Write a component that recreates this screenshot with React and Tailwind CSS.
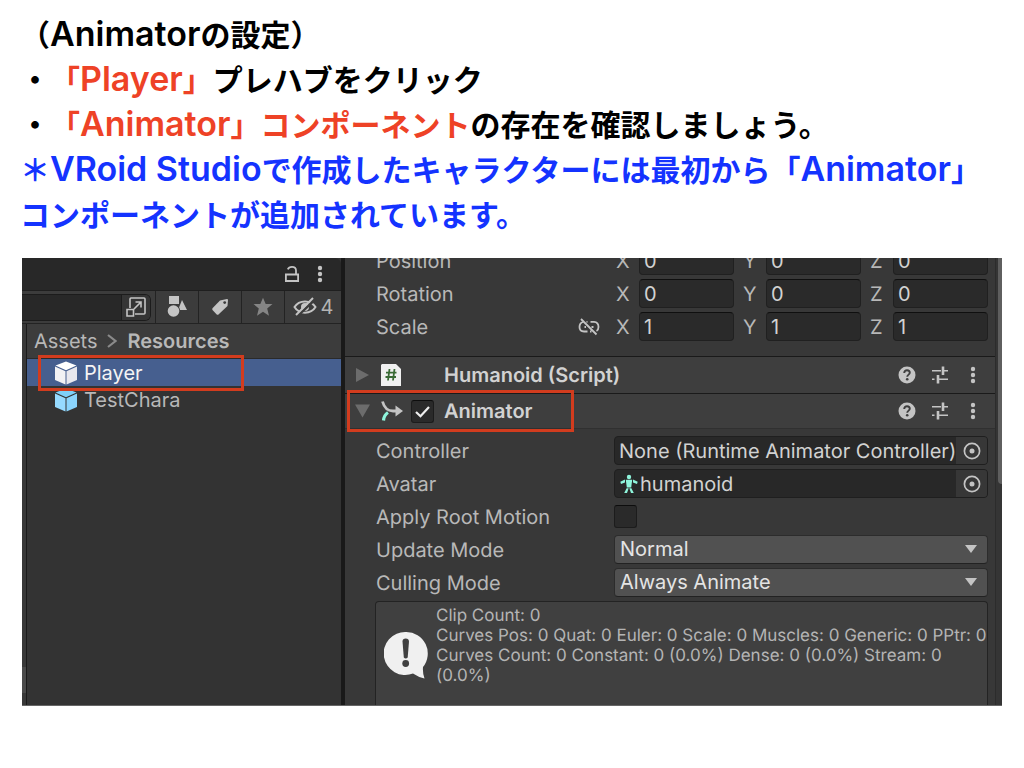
import { useState } from "react"

const transform = [
    { name: "Position", values: ["0", "0", "0"] },
    { name: "Rotation", values: ["0", "0", "0"] },
    { name: "Scale", values: ["1", "1", "1"], unlinked: true },
]

const axes = ["X", "Y", "Z"]

function Latin({ children }) {
    return <span className="font-[Inter,sans-serif] font-semibold text-[34px]/[30px]">{children}</span>
}

function Dots() {
    return (
        <svg viewBox="0 0 6 20" className="w-[6px] h-5" fill="#c4c4c4">
            <circle cx="3" cy="4" r="2.2" />
            <circle cx="3" cy="10" r="2.2" />
            <circle cx="3" cy="16" r="2.2" />
        </svg>
    )
}

function Cube({ top, left, right }) {
    return (
        <svg viewBox="0 0 24 24" className="w-6 h-6 shrink-0">
            <path d="M12 .5 22.500 4.600 12 9.200 1.500 4.600Z" fill={top} />
            <path d="M1 5.600 11.500 10.200V23.500L1 19Z" fill={left} />
            <path d="M23 5.600 12.500 10.200V23.500L23 19Z" fill={right} />
        </svg>
    )
}

function HeaderButtons() {
    return (
        <div className="ml-auto flex items-center gap-[15px] pr-[13px]">
            <button type="button" aria-label="Help">
                <svg viewBox="0 0 18 18" className="w-[18px] h-[18px]">
                    <circle cx="9" cy="9" r="8.500" fill="#c4c4c4" />
                    <path d="M6.200 7C6.200 5.200 7.400 4.200 9 4.200S11.800 5.200 11.800 6.800C11.800 8.500 9.200 8.800 9.200 10.800" fill="none" stroke="#3e3e3e" strokeWidth="1.900" />
                    <circle cx="9.200" cy="13.300" r="1.300" fill="#3e3e3e" />
                </svg>
            </button>
            <button type="button" aria-label="Presets">
                <svg viewBox="0 0 18 18" className="w-[18px] h-[18px]" fill="none" stroke="#c4c4c4">
                    <path d="M1 4.700H10M13 4.700H17M1 13.300H3.500M8 13.300H17" strokeWidth="1.600" />
                    <path d="M12 0.500V9M7 9V17.500" strokeWidth="2.600" />
                </svg>
            </button>
            <button type="button" aria-label="More" className="w-[18px] flex justify-center">
                <Dots />
            </button>
        </div>
    )
}

function Check({ id, label, checked, onChange }) {
    return (
        <span className="relative w-[23px] h-[23px] shrink-0">
            <input id={id} aria-label={label} type="checkbox" checked={checked} onChange={onChange} className="block appearance-none w-[23px] h-[23px] rounded-[3px] border border-[#1c1c1c] border-t-[#0d0d0d] bg-[#2a2a2a]" />
            {checked && (
                <svg viewBox="0 0 23 23" className="absolute inset-0 pointer-events-none" fill="none" stroke="#eeeeee" strokeWidth="2.200">
                    <path d="M5 12 9.500 16.300 18 7" />
                </svg>
            )}
        </span>
    )
}

function Row({ name, htmlFor, icon, children }) {
    return (
        <div className="flex items-center h-[33px] pl-[31px] pr-[7px]">
            <div className="w-[238px] shrink-0 flex items-center justify-between pr-[14px]">
                {htmlFor ? <label htmlFor={htmlFor}>{name}</label> : <span>{name}</span>}
                {icon}
            </div>
            {children}
        </div>
    )
}

function ObjectField({ name, icon, children }) {
    return (
        <div className="flex-1 min-w-0 h-[29px] flex items-center rounded-[4px] border border-[#1f1f1f] bg-[#282828] text-[#d2d2d2] overflow-hidden">
            <div className="flex-1 flex items-center pl-1 whitespace-nowrap">
                {icon}
                <span>{children}</span>
            </div>
            <button type="button" aria-label={`Select ${name}`} className="w-[31px] h-full bg-[#373737] flex items-center justify-center">
                <svg viewBox="0 0 18 18" className="w-[18px] h-[18px]">
                    <circle cx="9" cy="9" r="7.600" fill="none" stroke="#c4c4c4" strokeWidth="1.700" />
                    <circle cx="9" cy="9" r="2.500" fill="#c4c4c4" />
                </svg>
            </button>
        </div>
    )
}

function Dropdown({ id, value }) {
    return (
        <div className="relative flex-1 h-[29px]">
            <select id={id} defaultValue={value} className="appearance-none block w-full h-full rounded-[4px] border border-[#2c2c2c] border-b-[#222222] bg-[#515151] text-[#e4e4e4] pl-[5px] pb-[2px]">
                <option>{value}</option>
            </select>
            <svg viewBox="0 0 12 8" className="absolute right-[11px] top-[10px] w-3 h-2 pointer-events-none" fill="#c4c4c4">
                <path d="M0 0H12L6 8Z" />
            </svg>
        </div>
    )
}

function Instructions() {
    return (
        <div className="px-5 pt-[11px] font-['Noto_Sans_CJK_JP',sans-serif] font-bold text-[30px]/[45px] text-black whitespace-nowrap [text-spacing-trim:space-all]">
            <p>（<Latin>Animator</Latin>の設定）</p>
            <p>・<span className="text-[#ee4226]">「<Latin>Player</Latin>」</span>プレハブをクリック</p>
            <p>・<span className="text-[#ee4226]">「<Latin>Animator</Latin>」コンポーネント</span>の存在を確認しましょう。</p>
            <div className="text-[#1433ff]">
                <p>＊<Latin>VRoid Studio</Latin>で作成したキャラクターには最初から「<Latin>Animator</Latin>」</p>
                <p>コンポーネントが追加されています。</p>
            </div>
        </div>
    )
}

function Project() {
    return (
        <div className="w-[323px] shrink-0 border-r-[4px] border-[#191919] bg-[#333333] flex flex-col">
            <div className="h-[33px] bg-[#282828] border-b border-[#1f1f1f] flex items-center justify-end gap-[17px] pr-[18px] rounded-tr-[6px]">
                <button type="button" aria-label="Lock">
                    <svg viewBox="0 0 16 18" className="w-4 h-[18px]" fill="none" stroke="#c4c4c4" strokeWidth="1.800">
                        <path d="M1.900 9.500H14.100V16H1.900ZM12 9.500V5.500C12 3 10.500 1.800 8 1.800C6 1.800 4.500 2.600 3.800 4.300" />
                    </svg>
                </button>
                <button type="button" aria-label="Panel menu"><Dots /></button>
            </div>
            <div className="h-[33px] bg-[#3c3c3c] border-b border-[#232323] flex items-stretch">
                <div className="flex-1 min-w-0 flex items-center pr-[4px]">
                    <div className="flex-1 min-w-0 flex h-[27px] rounded-r-[6px] border border-l-0 border-[#1c1c1c] overflow-hidden">
                        <input type="text" aria-label="Search" className="flex-1 min-w-0 bg-[#282828] border-r border-[#1c1c1c]" />
                        <button type="button" aria-label="Open search" className="w-[28px] shrink-0 bg-[#353535] flex items-center justify-center">
                            <svg viewBox="0 0 20 20" className="w-5 h-5" fill="none" stroke="#c4c4c4" strokeWidth="1.600">
                                <path d="M4 11V2Q4 1 5 1H18Q19 1 19 2V16Q19 17 18 17H9M1 12.500H7.500V19H1ZM8 12 14.500 5.500M9.500 5H15V10.500" />
                            </svg>
                        </button>
                    </div>
                </div>
                <button type="button" aria-label="Filter by type" className="w-[43px] shrink-0 border-l border-[#232323] flex items-center justify-center">
                    <svg viewBox="0 0 22 24" className="w-[22px] h-6" fill="#c4c4c4">
                        <path d="M3 1H13V9H3ZM16 5 21 15H12Z" />
                        <circle cx="7.500" cy="16" r="6.800" fill="#3c3c3c" />
                        <circle cx="7.500" cy="16" r="5.800" />
                    </svg>
                </button>
                <button type="button" aria-label="Filter by label" className="w-[43px] shrink-0 border-l border-[#232323] flex items-center justify-center">
                    <svg viewBox="0 0 18 18" className="w-[18px] h-[18px]">
                        <path d="M9 2.500 16 1Q17 1 17 2L16.500 8 7.500 16.500Q6.500 17.300 5.500 16.300L1.500 12Q.8 11 1.700 10Z" fill="#c4c4c4" />
                        <circle cx="13.700" cy="4.600" r="1.400" fill="#3c3c3c" />
                    </svg>
                </button>
                <button type="button" aria-label="Favorites" className="w-[43px] shrink-0 border-l border-[#232323] flex items-center justify-center">
                    <svg viewBox="0 0 20 20" className="w-5 h-5" fill="#858585">
                        <path d="M10 .7 12.700 7H19.500L14.200 11.500 16 18.700 10 14.800 4 18.700 5.800 11.500.5 7H7.300Z" />
                    </svg>
                </button>
                <button type="button" aria-label="Hidden packages" className="w-[57px] shrink-0 border-l border-[#232323] flex items-center justify-center gap-1 text-xl text-[#b4b4b4]">
                    <svg viewBox="0 0 24 20" className="w-6 h-5" fill="none" stroke="#c4c4c4" strokeWidth="2">
                        <path d="M1.500 10C6 2.500 18 2.500 22.500 10C18 17.500 6 17.500 1.500 10Z" />
                        <circle cx="12" cy="10" r="4" fill="#c4c4c4" stroke="none" />
                        <path d="M4 19.500 22.500 2" stroke="#3c3c3c" strokeWidth="2.500" />
                        <path d="M3 18 20 1" />
                    </svg>
                    4
                </button>
            </div>
            <div className="flex-1 flex">
                <div className="w-[5px] bg-[#383838] border-r border-[#1a1a1a] flex flex-col justify-end pb-3">
                    <div className="h-[26px] bg-[#4a4a4a]" />
                </div>
                <div className="flex-1">
                    <nav className="h-[35px] bg-[#3c3c3c] border-b border-[#2a2a2a] flex items-center gap-[10px] pl-[7px]">
                        <a href="#assets">Assets</a>
                        <svg viewBox="0 0 10 14" className="w-[10px] h-[14px]" fill="none" stroke="#8a8a8a" strokeWidth="2.200">
                            <path d="M1 1 8.500 7 1 13" />
                        </svg>
                        <a href="#resources" className="font-semibold">Resources</a>
                    </nav>
                    <div className="relative">
                        <button type="button" className="w-full h-[27px] bg-[#465f8f] text-[#f4f4f4] flex items-center gap-[6px] pl-[27px]">
                            <Cube top="#ffffff" left="#f2f2f4" right="#e8e8ee" />
                            Player
                        </button>
                        <div className="absolute z-10 left-[11px] -top-[4px] w-[206px] h-[36px] border-[3px] border-[#d23c1e] pointer-events-none" />
                    </div>
                    <button type="button" className="w-full h-[27px] flex items-center gap-[6px] pl-[27px]">
                        <Cube top="#7fd0f8" left="#96daff" right="#8ad4fc" />
                        TestChara
                    </button>
                </div>
            </div>
        </div>
    )
}

function Inspector() {
    const [enabled, setEnabled] = useState(true)
    const [rootMotion, setRootMotion] = useState(false)

    return (
        <div className="flex-1 min-w-0 flex bg-[#383838]">
            <div className="flex-1 min-w-0">
                {/* scrolled a little, so the first row is cut by the panel's top */}
                <div className="-mt-[14px] pb-[13px]">
                    {transform.map((item) => (
                        <Row
                            key={item.name}
                            name={item.name}
                            icon={item.unlinked && (
                                <svg viewBox="0 0 22 18" className="w-[22px] h-[18px]" fill="none" stroke="#c4c4c4" strokeWidth="1.800">
                                    <path d="M5 4Q1.500 5 1.500 9Q1.500 13.500 6 13.500H9.500M8.500 3.800H9.500M12.500 3.800H16Q20.500 4 20.500 9Q20.500 12 18.500 13M6.500 9H8M13.500 9H15.500M12 13.500H13.500M3 1 18.500 16.500" />
                                </svg>
                            )}
                        >
                            <div className="flex-1 grid grid-cols-3 gap-[7px]">
                                {axes.map((axis, i) => (
                                    <div key={axis} className="flex items-center">
                                        <label htmlFor={item.name + axis} className="w-[25px] pl-[2px] shrink-0">{axis}</label>
                                        <input id={item.name + axis} type="text" defaultValue={item.values[i]} className="flex-1 min-w-0 h-[29px] rounded-[4px] border border-[#202020] border-t-[#0f0f0f] bg-[#2a2a2a] text-[#d2d2d2] pl-1" />
                                    </div>
                                ))}
                            </div>
                        </Row>
                    ))}
                </div>

                <div className="h-[37px] border-t border-[#1a1a1a] bg-[#3e3e3e] flex items-center pl-[11px]">
                    <svg viewBox="0 0 14 16" className="w-[14px] h-4" fill="#6c6c6c"><path d="M0 1 13 8 0 15Z" /></svg>
                    <svg viewBox="0 0 20 24" className="w-5 h-6 ml-[11px]">
                        <path d="M1 1H15L20 6V23H0V2Z" fill="#f0f0f0" />
                        <path d="M8.500 6 7 17.500M13.500 6 12 17.500M5 9.700H15.500M4.500 14H15" stroke="#3a6b35" strokeWidth="1.800" fill="none" />
                    </svg>
                    <h2 className="ml-[43px] font-semibold text-[#d2d2d2]">Humanoid (Script)</h2>
                    <HeaderButtons />
                </div>

                <div className="relative h-[36px] border-t border-[#1a1a1a] border-b border-b-[#303030] bg-[#3e3e3e] flex items-center pl-[10px]">
                    <svg viewBox="0 0 16 14" className="w-4 h-[14px]" fill="#6c6c6c"><path d="M0 .5H15L7.500 13.500Z" /></svg>
                    <svg viewBox="0 0 22 22" className="w-[22px] h-[22px] ml-[10px]" fill="none">
                        <path d="M1.500 1.500C3 7 6 11 12 11H16" stroke="#c4c4c4" strokeWidth="2.800" />
                        <path d="M14.500 5.500 22 11 14.500 16.500Z" fill="#c4c4c4" />
                        <path d="M7 12.500Q3 15 2.500 20.500" stroke="#8ff5dc" strokeWidth="3.200" />
                    </svg>
                    <div className="ml-[8px] h-[23px]">
                        <Check label="Animator enabled" checked={enabled} onChange={() => setEnabled(!enabled)} />
                    </div>
                    <h2 className="ml-[10px] font-semibold text-[#d2d2d2]">Animator</h2>
                    <HeaderButtons />
                    <div className="absolute z-10 left-[2px] -top-[4px] w-[227px] h-[42px] border-[3px] border-[#d23c1e] pointer-events-none" />
                </div>

                <div className="pt-[5px]">
                    <Row name="Controller">
                        <ObjectField name="Controller">None (Runtime Animator Controller)</ObjectField>
                    </Row>
                    <Row name="Avatar">
                        <ObjectField
                            name="Avatar"
                            icon={
                                <svg viewBox="0 0 18 20" className="w-[18px] h-5 ml-px mr-[2px]" fill="#8ff5dc">
                                    <circle cx="9" cy="3" r="2.200" />
                                    <path d="M5.800 5.800H12.200L11.200 13.500H6.800ZM5 5.500V8.500L1 10 .3 7.800ZM13 5.500V8.500L17 10 17.700 7.800ZM6.600 14.300H8.700L7 19H4.200ZM11.400 14.300H9.300L11 19H13.800Z" />
                                </svg>
                            }
                        >
                            humanoid
                        </ObjectField>
                    </Row>
                    <Row name="Apply Root Motion" htmlFor="rootMotion">
                        <Check id="rootMotion" checked={rootMotion} onChange={() => setRootMotion(!rootMotion)} />
                    </Row>
                    <Row name="Update Mode" htmlFor="updateMode">
                        <Dropdown id="updateMode" value="Normal" />
                    </Row>
                    <Row name="Culling Mode" htmlFor="cullingMode">
                        <Dropdown id="cullingMode" value="Always Animate" />
                    </Row>
                </div>

                <div className="mt-[2px] ml-[30px] mr-[7px] pt-1 pb-[19px] pl-2 flex items-start gap-2 rounded-t-[4px] border border-b-0 border-[#232323] bg-[#404040] text-[17px]/[20px] text-[#b4b4b4]">
                    <svg viewBox="0 0 44 48" className="w-11 h-12 mt-[25px] shrink-0">
                        <path d="M22 1A21.500 21.500 0 1 0 29 42.500Q34 46 40.500 47.500Q38.500 42 39 36A21.500 21.500 0 0 0 22 1Z" fill="#f0f0f0" />
                        <path d="M18.500 10.500Q18.500 7.500 21.700 7.500T25 10.500L23.700 26.500Q21.700 28.500 19.800 26.500Z" fill="#404040" />
                        <circle cx="21.700" cy="32.500" r="3.400" fill="#404040" />
                    </svg>
                    <div>
                        <p>Clip Count: 0</p>
                        <p>Curves Pos: 0 Quat: 0 Euler: 0 Scale: 0 Muscles: 0 Generic: 0 PPtr: 0</p>
                        <p>Curves Count: 0 Constant: 0 (0.0%) Dense: 0 (0.0%) Stream: 0 (0.0%)</p>
                    </div>
                </div>
            </div>
            <div className="w-[7px] shrink-0 border-l border-[#2c2c2c] bg-[#353535] pl-[2px]">
                <div className="h-[226px] bg-[#5f5f5f] rounded-bl-[4px]" />
            </div>
        </div>
    )
}

export default function App() {
    return (
        <main className="bg-white">
            <Instructions />
            <div className="mt-[22px] mx-[22px] flex overflow-hidden border-b border-[#666666] font-[Inter,sans-serif] text-xl/[24px] text-[#b8b8b8] [text-rendering:geometricPrecision]">
                <Project />
                <Inspector />
            </div>
        </main>
    )
}
